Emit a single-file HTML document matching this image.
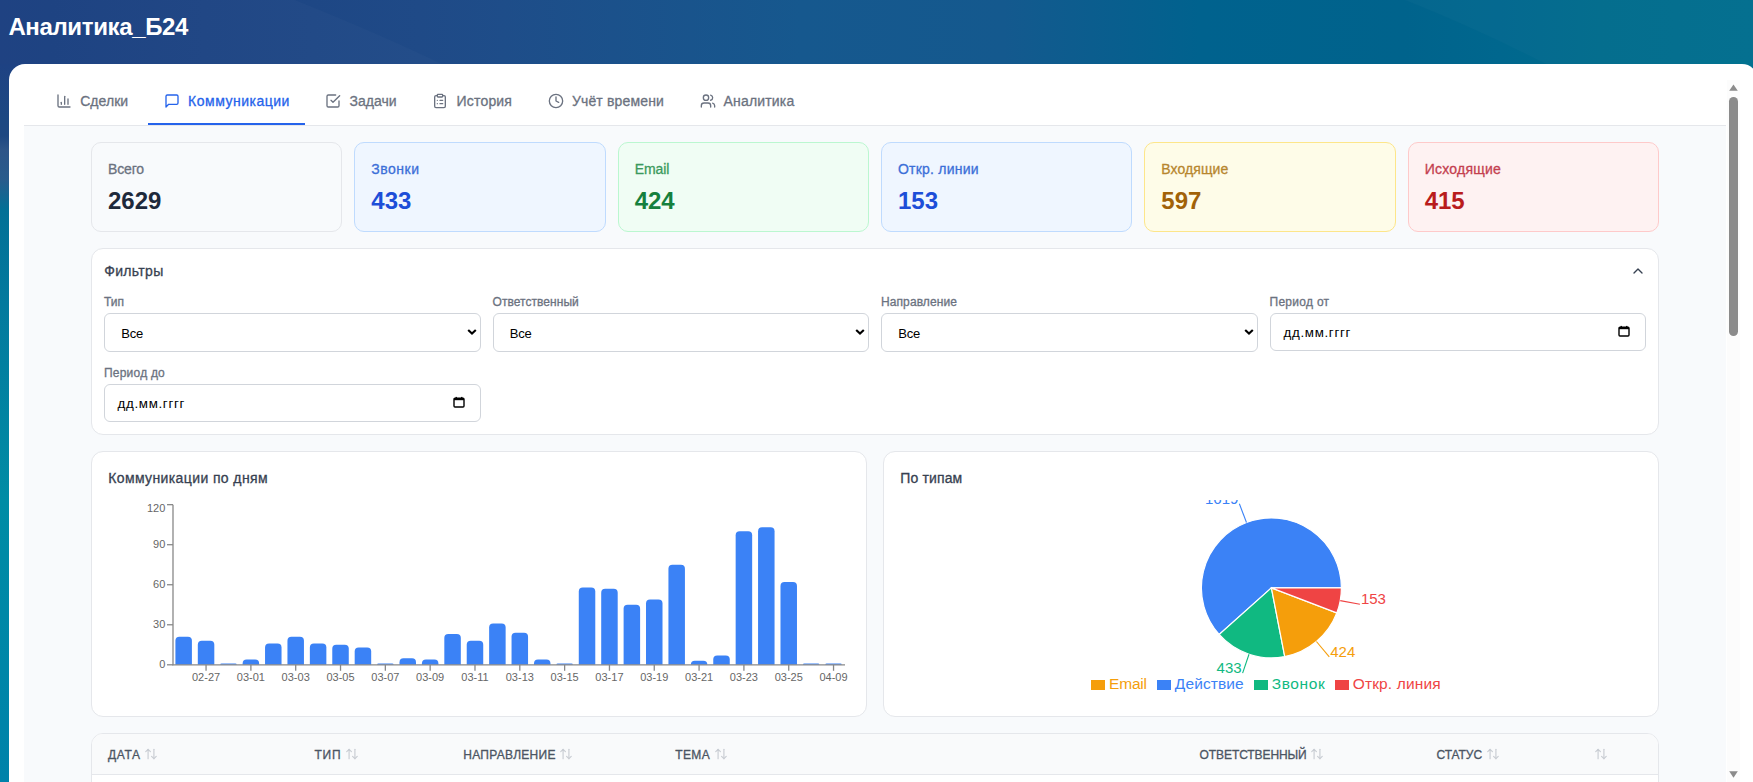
<!DOCTYPE html>
<html><head><meta charset="utf-8"><style>
html,body{margin:0;padding:0;}
body{width:1753px;height:782px;overflow:hidden;position:relative;background:#fff;font-family:"Liberation Sans", sans-serif;}
.t{position:absolute;white-space:nowrap;line-height:1;}
</style></head><body>
<div style="position:absolute;left:0;top:0;width:1753px;height:66px;background:linear-gradient(90deg,rgb(27,63,128) 0px,rgb(26,64,128) 50px,rgb(29,68,131) 205px,rgb(31,74,135) 420px,rgb(30,77,137) 504px,rgb(22,88,142) 800px,rgb(20,89,142) 1004px,rgb(0,98,142) 1200px,rgb(0,99,140) 1404px,rgb(0,103,142) 1500px,rgb(0,108,140) 1600px,rgb(0,110,142) 1753px);"></div><svg style="position:absolute;left:0;top:0" width="1753" height="66"><path d="M0,0 L295,0 Q380,34 446,66 L0,66 Z" fill="#fff" fill-opacity="0.02"/><path d="M1405,0 Q1480,30 1550,66 L1753,66 L1753,0 Z" fill="#fff" fill-opacity="0.02"/></svg><div style="position:absolute;left:0;top:64px;width:30px;height:718px;background:linear-gradient(180deg,rgb(30,66,131) 0px,rgb(28,72,130) 56px,rgb(30,72,130) 72px,rgb(45,85,136) 86px,rgb(40,92,140) 116px,rgb(2,112,150) 146px,rgb(3,122,158) 240px,rgb(0,140,165) 436px,rgb(0,130,170) 718px);"></div><div style="position:absolute;left:1700px;top:60px;width:53px;height:40px;background:rgb(2,114,144);"></div><div class="t" style="left:8.40px;top:14.78px;font-size:24px;font-weight:700;color:#fff;letter-spacing:-0.365px;">Аналитика_Б24</div><div style="position:absolute;left:9px;top:64px;width:1749px;height:760px;background:#fff;border-radius:16px;"></div><div style="position:absolute;left:24px;top:126px;width:1702px;height:700px;background:#f8fafc;"></div><div style="position:absolute;left:24px;top:125px;width:1702px;height:1px;background:#e5e7eb;"></div><div style="position:absolute;left:148px;top:123px;width:157px;height:2px;background:#2563eb;"></div><svg style="position:absolute;left:56px;top:93px" width="16" height="16" viewBox="0 0 24 24" fill="none" stroke="#6b7280" stroke-width="2" stroke-linecap="round" stroke-linejoin="round"><path d="M3 3v16a2 2 0 0 0 2 2h16"/><path d="M18 17V9"/><path d="M13 17V5"/><path d="M8 17v-3"/></svg><div class="t" style="left:80.20px;top:93.55px;font-size:14px;font-weight:400;-webkit-text-stroke:0.3px #6b7280;color:#6b7280;letter-spacing:0.047px;">Сделки</div><svg style="position:absolute;left:164.3px;top:93px" width="16" height="16" viewBox="0 0 24 24" fill="none" stroke="#2563eb" stroke-width="2" stroke-linecap="round" stroke-linejoin="round"><path d="M21 15a2 2 0 0 1-2 2H7l-4 4V5a2 2 0 0 1 2-2h14a2 2 0 0 1 2 2z"/></svg><div class="t" style="left:188.10px;top:93.55px;font-size:14px;font-weight:400;-webkit-text-stroke:0.3px #2563eb;color:#2563eb;letter-spacing:0.502px;">Коммуникации</div><svg style="position:absolute;left:325px;top:93px" width="16" height="16" viewBox="0 0 24 24" fill="none" stroke="#6b7280" stroke-width="2" stroke-linecap="round" stroke-linejoin="round"><path d="m9 11 3 3L22 4"/><path d="M21 12v7a2 2 0 0 1-2 2H5a2 2 0 0 1-2-2V5a2 2 0 0 1 2-2h11"/></svg><div class="t" style="left:349.40px;top:93.55px;font-size:14px;font-weight:400;-webkit-text-stroke:0.3px #6b7280;color:#6b7280;letter-spacing:0.047px;">Задачи</div><svg style="position:absolute;left:432px;top:93px" width="16" height="16" viewBox="0 0 24 24" fill="none" stroke="#6b7280" stroke-width="2" stroke-linecap="round" stroke-linejoin="round"><rect width="8" height="4" x="8" y="2" rx="1" ry="1"/><path d="M16 4h2a2 2 0 0 1 2 2v14a2 2 0 0 1-2 2H6a2 2 0 0 1-2-2V6a2 2 0 0 1 2-2h2"/><path d="M12 11h4"/><path d="M12 16h4"/><path d="M8 11h.01"/><path d="M8 16h.01"/></svg><div class="t" style="left:456.60px;top:93.55px;font-size:14px;font-weight:400;-webkit-text-stroke:0.3px #6b7280;color:#6b7280;letter-spacing:0.172px;">История</div><svg style="position:absolute;left:548px;top:93px" width="16" height="16" viewBox="0 0 24 24" fill="none" stroke="#6b7280" stroke-width="2" stroke-linecap="round" stroke-linejoin="round"><circle cx="12" cy="12" r="10"/><polyline points="12 6 12 12 16 14"/></svg><div class="t" style="left:571.90px;top:93.55px;font-size:14px;font-weight:400;-webkit-text-stroke:0.3px #6b7280;color:#6b7280;letter-spacing:0.154px;">Учёт времени</div><svg style="position:absolute;left:700px;top:93px" width="16" height="16" viewBox="0 0 24 24" fill="none" stroke="#6b7280" stroke-width="2" stroke-linecap="round" stroke-linejoin="round"><path d="M16 21v-2a4 4 0 0 0-4-4H6a4 4 0 0 0-4 4v2"/><circle cx="9" cy="7" r="4"/><path d="M22 21v-2a4 4 0 0 0-3-3.87"/><path d="M16 3.13a4 4 0 0 1 0 7.75"/></svg><div class="t" style="left:723.60px;top:93.55px;font-size:14px;font-weight:400;-webkit-text-stroke:0.3px #6b7280;color:#6b7280;letter-spacing:0.167px;">Аналитика</div><div style="position:absolute;left:91.00px;top:142px;width:251.33px;height:90px;box-sizing:border-box;background:#f8fafc;border:1px solid #e5e7eb;border-radius:10px;"></div><div class="t" style="left:108.00px;top:161.95px;font-size:14px;font-weight:400;-webkit-text-stroke:0.3px #6b7280;color:#6b7280;letter-spacing:-0.164px;">Всего</div><div class="t" style="left:108.00px;top:189.08px;font-size:24px;font-weight:700;color:#1e293b;">2629</div><div style="position:absolute;left:354.33px;top:142px;width:251.33px;height:90px;box-sizing:border-box;background:#eff6ff;border:1px solid #bfdbfe;border-radius:10px;"></div><div class="t" style="left:371.33px;top:161.95px;font-size:14px;font-weight:400;-webkit-text-stroke:0.3px #3b6fd8;color:#3b6fd8;letter-spacing:0.499px;">Звонки</div><div class="t" style="left:371.33px;top:189.08px;font-size:24px;font-weight:700;color:#1d4ed8;">433</div><div style="position:absolute;left:617.67px;top:142px;width:251.33px;height:90px;box-sizing:border-box;background:#f0fdf4;border:1px solid #bbf7d0;border-radius:10px;"></div><div class="t" style="left:634.67px;top:161.95px;font-size:14px;font-weight:400;-webkit-text-stroke:0.3px #3b9a5c;color:#3b9a5c;letter-spacing:-0.083px;">Email</div><div class="t" style="left:634.67px;top:189.08px;font-size:24px;font-weight:700;color:#15803d;">424</div><div style="position:absolute;left:881.00px;top:142px;width:251.33px;height:90px;box-sizing:border-box;background:#eff6ff;border:1px solid #bfdbfe;border-radius:10px;"></div><div class="t" style="left:898.00px;top:161.95px;font-size:14px;font-weight:400;-webkit-text-stroke:0.3px #3b6fd8;color:#3b6fd8;letter-spacing:0.222px;">Откр. линии</div><div class="t" style="left:898.00px;top:189.08px;font-size:24px;font-weight:700;color:#1d4ed8;">153</div><div style="position:absolute;left:1144.33px;top:142px;width:251.33px;height:90px;box-sizing:border-box;background:#fefce8;border:1px solid #fde68a;border-radius:10px;"></div><div class="t" style="left:1161.33px;top:161.95px;font-size:14px;font-weight:400;-webkit-text-stroke:0.3px #b7862e;color:#b7862e;letter-spacing:0.076px;">Входящие</div><div class="t" style="left:1161.33px;top:189.08px;font-size:24px;font-weight:700;color:#a16207;">597</div><div style="position:absolute;left:1407.67px;top:142px;width:251.33px;height:90px;box-sizing:border-box;background:#fef2f2;border:1px solid #fecaca;border-radius:10px;"></div><div class="t" style="left:1424.67px;top:161.95px;font-size:14px;font-weight:400;-webkit-text-stroke:0.3px #c4404f;color:#c4404f;letter-spacing:0.237px;">Исходящие</div><div class="t" style="left:1424.67px;top:189.08px;font-size:24px;font-weight:700;color:#b91c1c;">415</div><div style="position:absolute;left:91px;top:248px;width:1568px;height:187px;box-sizing:border-box;background:#fff;border:1px solid #e5e7eb;border-radius:12px;"></div><div class="t" style="left:104.20px;top:263.95px;font-size:14px;font-weight:400;-webkit-text-stroke:0.3px #374151;color:#374151;letter-spacing:0.329px;">Фильтры</div><svg style="position:absolute;left:1629.5px;top:263px" width="16" height="16" viewBox="0 0 24 24" fill="none" stroke="#374151" stroke-width="2" stroke-linecap="round" stroke-linejoin="round"><path d="m18 15-6-6-6 6"/></svg><div class="t" style="left:104.00px;top:295.64px;font-size:12px;font-weight:400;-webkit-text-stroke:0.3px #6b7280;color:#6b7280;letter-spacing:0.028px;">Тип</div><div style="position:absolute;left:104.00px;top:313px;width:376.50px;height:39px;box-sizing:border-box;background:#fff;border:1px solid #d1d5db;border-radius:6px;"></div><div class="t" style="left:121.30px;top:326.70px;font-size:13px;font-weight:400;color:#000;letter-spacing:-0.269px;">Все</div><svg style="position:absolute;left:466.90px;top:328px" width="10" height="8" viewBox="0 0 10 8"><path d="M1.2 2 L5 5.6 L8.8 2" fill="none" stroke="#000" stroke-width="2.1"/></svg><div class="t" style="left:492.50px;top:295.64px;font-size:12px;font-weight:400;-webkit-text-stroke:0.3px #6b7280;color:#6b7280;letter-spacing:0.046px;">Ответственный</div><div style="position:absolute;left:492.50px;top:313px;width:376.50px;height:39px;box-sizing:border-box;background:#fff;border:1px solid #d1d5db;border-radius:6px;"></div><div class="t" style="left:509.80px;top:326.70px;font-size:13px;font-weight:400;color:#000;letter-spacing:-0.269px;">Все</div><svg style="position:absolute;left:855.40px;top:328px" width="10" height="8" viewBox="0 0 10 8"><path d="M1.2 2 L5 5.6 L8.8 2" fill="none" stroke="#000" stroke-width="2.1"/></svg><div class="t" style="left:881.00px;top:295.64px;font-size:12px;font-weight:400;-webkit-text-stroke:0.3px #6b7280;color:#6b7280;letter-spacing:0.094px;">Направление</div><div style="position:absolute;left:881.00px;top:313px;width:376.50px;height:39px;box-sizing:border-box;background:#fff;border:1px solid #d1d5db;border-radius:6px;"></div><div class="t" style="left:898.30px;top:326.70px;font-size:13px;font-weight:400;color:#000;letter-spacing:-0.269px;">Все</div><svg style="position:absolute;left:1243.90px;top:328px" width="10" height="8" viewBox="0 0 10 8"><path d="M1.2 2 L5 5.6 L8.8 2" fill="none" stroke="#000" stroke-width="2.1"/></svg><div class="t" style="left:1269.50px;top:295.64px;font-size:12px;font-weight:400;-webkit-text-stroke:0.3px #6b7280;color:#6b7280;letter-spacing:0.286px;">Период от</div><div style="position:absolute;left:1269.50px;top:313px;width:376.50px;height:38px;box-sizing:border-box;background:#fff;border:1px solid #d1d5db;border-radius:6px;"></div><div class="t" style="left:1283.50px;top:326.12px;font-size:13.33px;font-weight:400;color:#000;letter-spacing:0.677px;">дд.мм.гггг</div><svg style="position:absolute;left:1618.00px;top:325px" width="12" height="12" viewBox="0 0 12 12"><rect x="1" y="2.2" width="10" height="8.8" rx="1" fill="none" stroke="#000" stroke-width="1.4"/><rect x="1" y="2" width="10" height="2.2" fill="#000"/><rect x="2.6" y="0.9" width="1.3" height="1.6" fill="#000"/><rect x="8.1" y="0.9" width="1.3" height="1.6" fill="#000"/></svg><div class="t" style="left:104.00px;top:366.64px;font-size:12px;font-weight:400;-webkit-text-stroke:0.3px #6b7280;color:#6b7280;letter-spacing:0.210px;">Период до</div><div style="position:absolute;left:104px;top:384px;width:376.50px;height:38px;box-sizing:border-box;background:#fff;border:1px solid #d1d5db;border-radius:6px;"></div><div class="t" style="left:117.50px;top:396.72px;font-size:13.33px;font-weight:400;color:#000;letter-spacing:0.677px;">дд.мм.гггг</div><svg style="position:absolute;left:452.50px;top:396px" width="12" height="12" viewBox="0 0 12 12"><rect x="1" y="2.2" width="10" height="8.8" rx="1" fill="none" stroke="#000" stroke-width="1.4"/><rect x="1" y="2" width="10" height="2.2" fill="#000"/><rect x="2.6" y="0.9" width="1.3" height="1.6" fill="#000"/><rect x="8.1" y="0.9" width="1.3" height="1.6" fill="#000"/></svg><div style="position:absolute;left:91px;top:451px;width:776px;height:266px;box-sizing:border-box;background:#fff;border:1px solid #e5e7eb;border-radius:12px;"></div><div style="position:absolute;left:883px;top:451px;width:776px;height:266px;box-sizing:border-box;background:#fff;border:1px solid #e5e7eb;border-radius:12px;"></div><div class="t" style="left:108.20px;top:471.15px;font-size:14px;font-weight:400;-webkit-text-stroke:0.3px #374151;color:#374151;letter-spacing:0.388px;">Коммуникации по дням</div><div class="t" style="left:900.20px;top:471.15px;font-size:14px;font-weight:400;-webkit-text-stroke:0.3px #374151;color:#374151;letter-spacing:0.154px;">По типам</div><svg style="position:absolute;left:0;top:0" width="1753" height="782"><path d="M175.41,664.80 L175.41,640.78 A4.00,4.00 0 0 1 179.41,636.78 L187.91,636.78 A4.00,4.00 0 0 1 191.91,640.78 L191.91,664.80 Z" fill="#3b82f6"/><path d="M197.81,664.80 L197.81,644.78 A4.00,4.00 0 0 1 201.81,640.78 L210.31,640.78 A4.00,4.00 0 0 1 214.31,644.78 L214.31,664.80 Z" fill="#3b82f6"/><path d="M220.22,664.80 L220.22,664.80 A1.33,1.33 0 0 1 221.56,663.47 L235.39,663.47 A1.33,1.33 0 0 1 236.72,664.80 L236.72,664.80 Z" fill="#3b82f6"/><path d="M242.64,664.80 L242.64,663.46 A4.00,4.00 0 0 1 246.64,659.46 L255.13,659.46 A4.00,4.00 0 0 1 259.13,663.46 L259.13,664.80 Z" fill="#3b82f6"/><path d="M265.04,664.80 L265.04,647.45 A4.00,4.00 0 0 1 269.04,643.45 L277.54,643.45 A4.00,4.00 0 0 1 281.54,647.45 L281.54,664.80 Z" fill="#3b82f6"/><path d="M287.45,664.80 L287.45,640.78 A4.00,4.00 0 0 1 291.45,636.78 L299.95,636.78 A4.00,4.00 0 0 1 303.95,640.78 L303.95,664.80 Z" fill="#3b82f6"/><path d="M309.86,664.80 L309.86,647.45 A4.00,4.00 0 0 1 313.86,643.45 L322.36,643.45 A4.00,4.00 0 0 1 326.36,647.45 L326.36,664.80 Z" fill="#3b82f6"/><path d="M332.27,664.80 L332.27,648.78 A4.00,4.00 0 0 1 336.27,644.78 L344.77,644.78 A4.00,4.00 0 0 1 348.77,648.78 L348.77,664.80 Z" fill="#3b82f6"/><path d="M354.69,664.80 L354.69,651.45 A4.00,4.00 0 0 1 358.69,647.45 L367.19,647.45 A4.00,4.00 0 0 1 371.19,651.45 L371.19,664.80 Z" fill="#3b82f6"/><path d="M377.09,664.80 L377.09,664.80 A1.33,1.33 0 0 1 378.43,663.47 L392.26,663.47 A1.33,1.33 0 0 1 393.59,664.80 L393.59,664.80 Z" fill="#3b82f6"/><path d="M399.50,664.80 L399.50,662.13 A4.00,4.00 0 0 1 403.50,658.13 L412.00,658.13 A4.00,4.00 0 0 1 416.00,662.13 L416.00,664.80 Z" fill="#3b82f6"/><path d="M421.91,664.80 L421.91,663.46 A4.00,4.00 0 0 1 425.91,659.46 L434.41,659.46 A4.00,4.00 0 0 1 438.41,663.46 L438.41,664.80 Z" fill="#3b82f6"/><path d="M444.32,664.80 L444.32,638.11 A4.00,4.00 0 0 1 448.32,634.11 L456.82,634.11 A4.00,4.00 0 0 1 460.82,638.11 L460.82,664.80 Z" fill="#3b82f6"/><path d="M466.73,664.80 L466.73,644.78 A4.00,4.00 0 0 1 470.73,640.78 L479.23,640.78 A4.00,4.00 0 0 1 483.23,644.78 L483.23,664.80 Z" fill="#3b82f6"/><path d="M489.14,664.80 L489.14,627.43 A4.00,4.00 0 0 1 493.14,623.43 L501.64,623.43 A4.00,4.00 0 0 1 505.64,627.43 L505.64,664.80 Z" fill="#3b82f6"/><path d="M511.55,664.80 L511.55,636.77 A4.00,4.00 0 0 1 515.55,632.77 L524.05,632.77 A4.00,4.00 0 0 1 528.05,636.77 L528.05,664.80 Z" fill="#3b82f6"/><path d="M533.97,664.80 L533.97,663.46 A4.00,4.00 0 0 1 537.97,659.46 L546.47,659.46 A4.00,4.00 0 0 1 550.47,663.46 L550.47,664.80 Z" fill="#3b82f6"/><path d="M556.38,664.80 L556.38,664.80 A1.33,1.33 0 0 1 557.71,663.47 L571.54,663.47 A1.33,1.33 0 0 1 572.88,664.80 L572.88,664.80 Z" fill="#3b82f6"/><path d="M578.78,664.80 L578.78,591.40 A4.00,4.00 0 0 1 582.78,587.40 L591.28,587.40 A4.00,4.00 0 0 1 595.28,591.40 L595.28,664.80 Z" fill="#3b82f6"/><path d="M601.20,664.80 L601.20,592.74 A4.00,4.00 0 0 1 605.20,588.74 L613.70,588.74 A4.00,4.00 0 0 1 617.70,592.74 L617.70,664.80 Z" fill="#3b82f6"/><path d="M623.61,664.80 L623.61,608.75 A4.00,4.00 0 0 1 627.61,604.75 L636.11,604.75 A4.00,4.00 0 0 1 640.11,608.75 L640.11,664.80 Z" fill="#3b82f6"/><path d="M646.01,664.80 L646.01,603.41 A4.00,4.00 0 0 1 650.01,599.41 L658.51,599.41 A4.00,4.00 0 0 1 662.51,603.41 L662.51,664.80 Z" fill="#3b82f6"/><path d="M668.43,664.80 L668.43,568.72 A4.00,4.00 0 0 1 672.43,564.72 L680.93,564.72 A4.00,4.00 0 0 1 684.93,568.72 L684.93,664.80 Z" fill="#3b82f6"/><path d="M690.83,664.80 L690.83,664.80 A4.00,4.00 0 0 1 694.83,660.80 L703.33,660.80 A4.00,4.00 0 0 1 707.33,664.80 L707.33,664.80 Z" fill="#3b82f6"/><path d="M713.25,664.80 L713.25,659.46 A4.00,4.00 0 0 1 717.25,655.46 L725.75,655.46 A4.00,4.00 0 0 1 729.75,659.46 L729.75,664.80 Z" fill="#3b82f6"/><path d="M735.66,664.80 L735.66,535.36 A4.00,4.00 0 0 1 739.66,531.36 L748.16,531.36 A4.00,4.00 0 0 1 752.16,535.36 L752.16,664.80 Z" fill="#3b82f6"/><path d="M758.06,664.80 L758.06,531.36 A4.00,4.00 0 0 1 762.06,527.36 L770.56,527.36 A4.00,4.00 0 0 1 774.56,531.36 L774.56,664.80 Z" fill="#3b82f6"/><path d="M780.48,664.80 L780.48,586.07 A4.00,4.00 0 0 1 784.48,582.07 L792.98,582.07 A4.00,4.00 0 0 1 796.98,586.07 L796.98,664.80 Z" fill="#3b82f6"/><path d="M802.89,664.80 L802.89,664.80 A1.33,1.33 0 0 1 804.22,663.47 L818.05,663.47 A1.33,1.33 0 0 1 819.39,664.80 L819.39,664.80 Z" fill="#3b82f6"/><path d="M825.29,664.80 L825.29,664.80 A1.33,1.33 0 0 1 826.63,663.47 L840.46,663.47 A1.33,1.33 0 0 1 841.79,664.80 L841.79,664.80 Z" fill="#3b82f6"/><line x1="173" y1="504.7" x2="173" y2="665.3" stroke="#888" stroke-width="1.3"/><line x1="172.45" y1="664.8" x2="845" y2="664.8" stroke="#888" stroke-width="1.3"/><line x1="167" y1="664.80" x2="173" y2="664.80" stroke="#888" stroke-width="1.3"/><line x1="167" y1="624.77" x2="173" y2="624.77" stroke="#888" stroke-width="1.3"/><line x1="167" y1="584.74" x2="173" y2="584.74" stroke="#888" stroke-width="1.3"/><line x1="167" y1="544.70" x2="173" y2="544.70" stroke="#888" stroke-width="1.3"/><line x1="167" y1="504.67" x2="173" y2="504.67" stroke="#888" stroke-width="1.3"/><line x1="206.06" y1="664.8" x2="206.06" y2="670.8" stroke="#888" stroke-width="1.3"/><line x1="250.89" y1="664.8" x2="250.89" y2="670.8" stroke="#888" stroke-width="1.3"/><line x1="295.70" y1="664.8" x2="295.70" y2="670.8" stroke="#888" stroke-width="1.3"/><line x1="340.52" y1="664.8" x2="340.52" y2="670.8" stroke="#888" stroke-width="1.3"/><line x1="385.34" y1="664.8" x2="385.34" y2="670.8" stroke="#888" stroke-width="1.3"/><line x1="430.16" y1="664.8" x2="430.16" y2="670.8" stroke="#888" stroke-width="1.3"/><line x1="474.98" y1="664.8" x2="474.98" y2="670.8" stroke="#888" stroke-width="1.3"/><line x1="519.80" y1="664.8" x2="519.80" y2="670.8" stroke="#888" stroke-width="1.3"/><line x1="564.63" y1="664.8" x2="564.63" y2="670.8" stroke="#888" stroke-width="1.3"/><line x1="609.45" y1="664.8" x2="609.45" y2="670.8" stroke="#888" stroke-width="1.3"/><line x1="654.26" y1="664.8" x2="654.26" y2="670.8" stroke="#888" stroke-width="1.3"/><line x1="699.08" y1="664.8" x2="699.08" y2="670.8" stroke="#888" stroke-width="1.3"/><line x1="743.91" y1="664.8" x2="743.91" y2="670.8" stroke="#888" stroke-width="1.3"/><line x1="788.73" y1="664.8" x2="788.73" y2="670.8" stroke="#888" stroke-width="1.3"/><line x1="833.54" y1="664.8" x2="833.54" y2="670.8" stroke="#888" stroke-width="1.3"/></svg><div class="t" style="left:165.30px;top:659.39px;font-size:11px;font-weight:400;color:#666;transform:translateX(-100%);">0</div><div class="t" style="left:165.30px;top:619.36px;font-size:11px;font-weight:400;color:#666;transform:translateX(-100%);">30</div><div class="t" style="left:165.30px;top:579.32px;font-size:11px;font-weight:400;color:#666;transform:translateX(-100%);">60</div><div class="t" style="left:165.30px;top:539.29px;font-size:11px;font-weight:400;color:#666;transform:translateX(-100%);">90</div><div class="t" style="left:165.30px;top:502.59px;font-size:11px;font-weight:400;color:#666;transform:translateX(-100%);">120</div><div class="t" style="left:206.06px;top:672.09px;font-size:11px;font-weight:400;color:#666;transform:translateX(-50%);">02-27</div><div class="t" style="left:250.89px;top:672.09px;font-size:11px;font-weight:400;color:#666;transform:translateX(-50%);">03-01</div><div class="t" style="left:295.70px;top:672.09px;font-size:11px;font-weight:400;color:#666;transform:translateX(-50%);">03-03</div><div class="t" style="left:340.52px;top:672.09px;font-size:11px;font-weight:400;color:#666;transform:translateX(-50%);">03-05</div><div class="t" style="left:385.34px;top:672.09px;font-size:11px;font-weight:400;color:#666;transform:translateX(-50%);">03-07</div><div class="t" style="left:430.16px;top:672.09px;font-size:11px;font-weight:400;color:#666;transform:translateX(-50%);">03-09</div><div class="t" style="left:474.98px;top:672.09px;font-size:11px;font-weight:400;color:#666;transform:translateX(-50%);">03-11</div><div class="t" style="left:519.80px;top:672.09px;font-size:11px;font-weight:400;color:#666;transform:translateX(-50%);">03-13</div><div class="t" style="left:564.63px;top:672.09px;font-size:11px;font-weight:400;color:#666;transform:translateX(-50%);">03-15</div><div class="t" style="left:609.45px;top:672.09px;font-size:11px;font-weight:400;color:#666;transform:translateX(-50%);">03-17</div><div class="t" style="left:654.26px;top:672.09px;font-size:11px;font-weight:400;color:#666;transform:translateX(-50%);">03-19</div><div class="t" style="left:699.08px;top:672.09px;font-size:11px;font-weight:400;color:#666;transform:translateX(-50%);">03-21</div><div class="t" style="left:743.91px;top:672.09px;font-size:11px;font-weight:400;color:#666;transform:translateX(-50%);">03-23</div><div class="t" style="left:788.73px;top:672.09px;font-size:11px;font-weight:400;color:#666;transform:translateX(-50%);">03-25</div><div class="t" style="left:833.54px;top:672.09px;font-size:11px;font-weight:400;color:#666;transform:translateX(-50%);">04-09</div><svg style="position:absolute;left:899px;top:500px" width="744" height="200" viewBox="899 500 744 200"><path d="M1271.4,587.9 L1341.40,587.90 A70,70 0 1 0 1219.13,634.46 Z" fill="#3b82f6" stroke="#fff" stroke-width="1.2"/><path d="M1246.49,522.48 L1239.37,503.79" stroke="#3b82f6" stroke-width="1.1" fill="none"/><path d="M1271.4,587.9 L1219.13,634.46 A70,70 0 0 0 1284.74,656.62 Z" fill="#10b981" stroke="#fff" stroke-width="1.2"/><path d="M1249.01,654.22 L1242.61,673.17" stroke="#10b981" stroke-width="1.1" fill="none"/><path d="M1271.4,587.9 L1284.74,656.62 A70,70 0 0 0 1336.77,612.93 Z" fill="#f59e0b" stroke="#fff" stroke-width="1.2"/><path d="M1316.41,641.51 L1329.27,656.82" stroke="#f59e0b" stroke-width="1.1" fill="none"/><path d="M1271.4,587.9 L1336.77,612.93 A70,70 0 0 0 1341.40,587.90 Z" fill="#ef4444" stroke="#fff" stroke-width="1.2"/><path d="M1340.23,600.63 L1359.90,604.26" stroke="#ef4444" stroke-width="1.1" fill="none"/><text x="1238.37" y="503.79" fill="#3b82f6" font-size="15" text-anchor="end" font-family="Liberation Sans">1619</text><text x="1241.61" y="673.17" fill="#10b981" font-size="15" text-anchor="end" font-family="Liberation Sans">433</text><text x="1330.27" y="656.82" fill="#f59e0b" font-size="15" text-anchor="start" font-family="Liberation Sans">424</text><text x="1360.90" y="604.26" fill="#ef4444" font-size="15" text-anchor="start" font-family="Liberation Sans">153</text></svg><div style="position:absolute;left:1091px;top:680.2px;width:14px;height:9.6px;background:#f59e0b;"></div><div class="t" style="left:1109.10px;top:675.98px;font-size:15.5px;font-weight:400;color:#f59e0b;letter-spacing:-0.213px;">Email</div><div style="position:absolute;left:1157.2px;top:680.2px;width:14px;height:9.6px;background:#3b82f6;"></div><div class="t" style="left:1174.80px;top:675.98px;font-size:15.5px;font-weight:400;color:#3b82f6;letter-spacing:0.107px;">Действие</div><div style="position:absolute;left:1254.2px;top:680.2px;width:14px;height:9.6px;background:#10b981;"></div><div class="t" style="left:1271.70px;top:675.98px;font-size:15.5px;font-weight:400;color:#10b981;letter-spacing:0.614px;">Звонок</div><div style="position:absolute;left:1335.2px;top:680.2px;width:14px;height:9.6px;background:#ef4444;"></div><div class="t" style="left:1352.80px;top:675.98px;font-size:15.5px;font-weight:400;color:#ef4444;letter-spacing:0.129px;">Откр. линия</div><div style="position:absolute;left:91px;top:733px;width:1568px;height:120px;box-sizing:border-box;background:#fff;border:1px solid #e5e7eb;border-radius:12px;overflow:hidden;"><div style="height:40px;background:#f9fafb;border-bottom:1px solid #e5e7eb;"></div></div><div class="t" style="left:108.00px;top:748.64px;font-size:12px;font-weight:400;-webkit-text-stroke:0.3px #4b5563;color:#4b5563;letter-spacing:0.665px;">ДАТА</div><div class="t" style="left:314.60px;top:748.64px;font-size:12px;font-weight:400;-webkit-text-stroke:0.3px #4b5563;color:#4b5563;letter-spacing:0.669px;">ТИП</div><div class="t" style="left:463.20px;top:748.64px;font-size:12px;font-weight:400;-webkit-text-stroke:0.3px #4b5563;color:#4b5563;letter-spacing:0.289px;">НАПРАВЛЕНИЕ</div><div class="t" style="left:675.20px;top:748.64px;font-size:12px;font-weight:400;-webkit-text-stroke:0.3px #4b5563;color:#4b5563;letter-spacing:0.389px;">ТЕМА</div><div class="t" style="left:1199.60px;top:748.64px;font-size:12px;font-weight:400;-webkit-text-stroke:0.3px #4b5563;color:#4b5563;letter-spacing:-0.091px;">ОТВЕТСТВЕННЫЙ</div><div class="t" style="left:1436.40px;top:748.64px;font-size:12px;font-weight:400;-webkit-text-stroke:0.3px #4b5563;color:#4b5563;letter-spacing:-0.032px;">СТАТУС</div><svg style="position:absolute;left:144.1px;top:746.5px" width="14" height="14" viewBox="0 0 24 24" fill="none" stroke="#c9cdd3" stroke-width="2" stroke-linecap="round" stroke-linejoin="round"><path d="m21 16-4 4-4-4"/><path d="M17 20V4"/><path d="m3 8 4-4 4 4"/><path d="M7 4v16"/></svg><svg style="position:absolute;left:345.2px;top:746.5px" width="14" height="14" viewBox="0 0 24 24" fill="none" stroke="#c9cdd3" stroke-width="2" stroke-linecap="round" stroke-linejoin="round"><path d="m21 16-4 4-4-4"/><path d="M17 20V4"/><path d="m3 8 4-4 4 4"/><path d="M7 4v16"/></svg><svg style="position:absolute;left:558.6px;top:746.5px" width="14" height="14" viewBox="0 0 24 24" fill="none" stroke="#c9cdd3" stroke-width="2" stroke-linecap="round" stroke-linejoin="round"><path d="m21 16-4 4-4-4"/><path d="M17 20V4"/><path d="m3 8 4-4 4 4"/><path d="M7 4v16"/></svg><svg style="position:absolute;left:713.5px;top:746.5px" width="14" height="14" viewBox="0 0 24 24" fill="none" stroke="#c9cdd3" stroke-width="2" stroke-linecap="round" stroke-linejoin="round"><path d="m21 16-4 4-4-4"/><path d="M17 20V4"/><path d="m3 8 4-4 4 4"/><path d="M7 4v16"/></svg><svg style="position:absolute;left:1309.8px;top:746.5px" width="14" height="14" viewBox="0 0 24 24" fill="none" stroke="#c9cdd3" stroke-width="2" stroke-linecap="round" stroke-linejoin="round"><path d="m21 16-4 4-4-4"/><path d="M17 20V4"/><path d="m3 8 4-4 4 4"/><path d="M7 4v16"/></svg><svg style="position:absolute;left:1485.8px;top:746.5px" width="14" height="14" viewBox="0 0 24 24" fill="none" stroke="#c9cdd3" stroke-width="2" stroke-linecap="round" stroke-linejoin="round"><path d="m21 16-4 4-4-4"/><path d="M17 20V4"/><path d="m3 8 4-4 4 4"/><path d="M7 4v16"/></svg><svg style="position:absolute;left:1593.5px;top:746.5px" width="14" height="14" viewBox="0 0 24 24" fill="none" stroke="#c9cdd3" stroke-width="2" stroke-linecap="round" stroke-linejoin="round"><path d="m21 16-4 4-4-4"/><path d="M17 20V4"/><path d="m3 8 4-4 4 4"/><path d="M7 4v16"/></svg><div style="position:absolute;left:1727px;top:80px;width:13px;height:702px;background:#fcfcfc;"></div><div style="position:absolute;left:1729px;top:97px;width:9px;height:239px;background:#8b8b8b;border-radius:4.5px;"></div><svg style="position:absolute;left:1729px;top:84px" width="9" height="7" viewBox="0 0 9 7"><path d="M4.5 0.5 L8.8 6.8 L0.2 6.8 Z" fill="#8b8b8b"/></svg><svg style="position:absolute;left:1729px;top:771px" width="9" height="7" viewBox="0 0 9 7"><path d="M0.2 0.2 L8.8 0.2 L4.5 6.8 Z" fill="#8b8b8b"/></svg>
</body></html>
